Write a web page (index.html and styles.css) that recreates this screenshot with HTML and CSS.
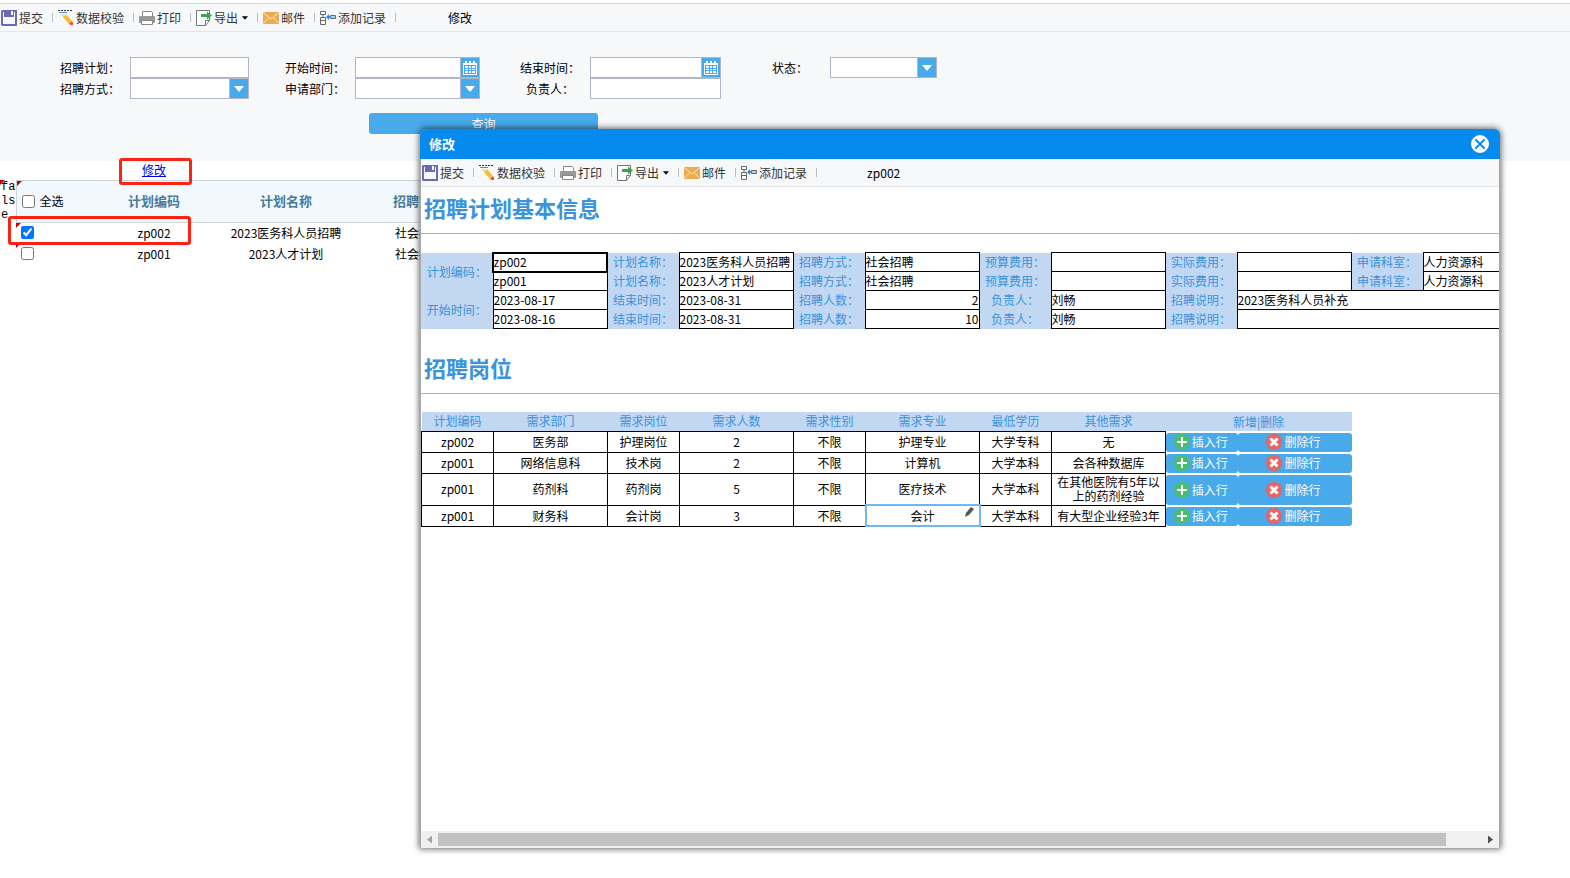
FILE: index.html
```html
<!DOCTYPE html>
<html lang="zh-CN">
<head>
    <meta charset="UTF-8">
    <meta name="viewport" content="width=device-width, initial-scale=1.0">
    <title>招聘计划</title>
    <link rel="stylesheet" href="styles.css">
</head>
<body>

    <!-- shared icons -->
    <svg class="icon-defs" width="0" height="0">
        <symbol id="i-save" viewBox="0 0 16 16"><path fill="#6a6ab0" d="M1 0h15v16H1L0 15V1z"/><path fill="#f7f8fa" d="M2 2h1v5h10V2h1v12H2z"/><path fill="#f7f8fa" d="M10 1h2v4h-2z"/></symbol>
        <symbol id="i-check" viewBox="0 0 16 16"><path stroke="#333" stroke-dasharray="2 1" d="M0 .500h14"/><path stroke="#3d8fff" d="M1 2.500h8"/><path stroke="#8a7a66" d="M4 4l2 3"/><path fill="#f9bd33" d="M5 7l3-3 6 7-3 3z"/><path fill="#fde7b0" d="M4 4l4 0-3 3z"/><path fill="#ea4b33" d="M11 14l3-3 1 2v2h-2z"/></symbol>
        <symbol id="i-print" viewBox="0 0 16 16"><path fill="#fff" stroke="#888" d="M3.500 6V1.500h9l1 1V6"/><rect y="6" width="16" height="7" rx="1" fill="#999"/><path fill="#fff" stroke="#888" d="M2.500 10.500h11v4h-11z"/></symbol>
        <symbol id="i-export" viewBox="0 0 16 16"><path fill="#fff" stroke="#777" d="M.500.500h13v10l-4 5h-9zM9.500 15v-4.500h4"/><path fill="#37a84a" d="M5 4h6V1.500L16 5.500 11 9.500V7H5z"/></symbol>
        <symbol id="i-mail" viewBox="0 0 16 12"><path fill="#ebac4f" d="M0 0h16v12H0z"/><path fill="none" stroke="#fce6c4" d="M0 .500l8 6.500 8-6.500M0 11.500l6-6M16 11.500l-6-6"/></symbol>
        <symbol id="i-add" viewBox="0 0 16 16"><path fill="#fff" stroke="#666" d="M.500 1.500h5v3h-5zM.500 7.500h5v3h-5zM.500 10.500h5v4h-5zM3 4v3"/><path fill="#a9d3f5" stroke="#666" d="M10.500 5.500h5v3h-5z"/><path fill="#2f86e8" d="M6 7l3-3v2h2v2H9v2z"/></symbol>
        <symbol id="i-caret" viewBox="0 0 10 6"><path fill="currentColor" d="M0 0h10L5 6z"/></symbol>
        <symbol id="i-cal" viewBox="0 0 14 14"><path fill="#fff" d="M0 2h14v12H0z"/><path fill="#fff" d="M2 0h2v3H2zM6 0h2v3H6zM10 0h2v3h-2z"/><path fill="#48a9eb" d="M1 4h12v9H1z"/><path fill="#fff" d="M2 5h3v2H2zM6 5h2v2H6zM9 5h3v2H9zM2 8h3v1H2zM6 8h2v1H6zM9 8h3v1H9zM2 10h3v2H2zM6 10h2v2H6zM9 10h3v2H9z"/></symbol>
        <symbol id="i-plus" viewBox="0 0 16 16"><circle cx="8" cy="8" r="8" fill="#48bd70"/><path stroke="#fff" stroke-width="2" d="M8 3v10M3 8h10"/></symbol>
        <symbol id="i-del" viewBox="0 0 16 16"><circle cx="8" cy="8" r="8" fill="#e86464"/><path stroke="#fff" stroke-width="3" d="M4.500 4.500l7 7M11.500 4.500l-7 7"/></symbol>
        <symbol id="i-close" viewBox="0 0 18 18"><circle cx="9" cy="9" r="9" fill="#fff"/><path stroke="#058bee" stroke-width="2" d="M4.500 4.500l9 9M13.500 4.500l-9 9"/></symbol>
        <symbol id="i-pencil" viewBox="0 0 10 10"><path fill="#555" d="M1 6l5-6 3 2-5 6-4 2z"/></symbol>
    </svg>

    <div class="toolbar main-toolbar">
        <button><svg><use href="#i-save"/></svg>提交</button>
        <button><svg><use href="#i-check"/></svg>数据校验</button>
        <button><svg><use href="#i-print"/></svg>打印</button>
        <button><svg><use href="#i-export"/></svg>导出<svg class="caret"><use href="#i-caret"/></svg></button>
        <button><svg><use href="#i-mail"/></svg>邮件</button>
        <button><svg><use href="#i-add"/></svg>添加记录</button>
        <span class="current">修改</span>
    </div>

    <form class="search">
        <div class="fields">
            <label for="plan">招聘计划：</label>
            <div class="field"><input type="text" id="plan"></div>
            <label for="start">开始时间：</label>
            <div class="field"><input type="text" id="start"><span class="drop"><svg class="cal"><use href="#i-cal"/></svg></span></div>
            <label for="end">结束时间：</label>
            <div class="field"><input type="text" id="end"><span class="drop"><svg class="cal"><use href="#i-cal"/></svg></span></div>
            <label for="status">状态：</label>
            <div class="field"><select id="status"></select><span class="drop"><svg class="arrow"><use href="#i-caret"/></svg></span></div>

            <label for="way">招聘方式：</label>
            <div class="field"><select id="way"></select><span class="drop"><svg class="arrow"><use href="#i-caret"/></svg></span></div>
            <label for="dept">申请部门：</label>
            <div class="field"><select id="dept"></select><span class="drop"><svg class="arrow"><use href="#i-caret"/></svg></span></div>
            <label for="owner">负责人：</label>
            <div class="field"><input type="text" id="owner"></div>
        </div>
        <button type="button" class="query">查询</button>
    </form>

    <div class="list">
        <table class="plans">
            <colgroup><col class="c-flag"><col class="c-check"><col class="c-code"><col class="c-name"><col class="c-way"></colgroup>
            <tr class="links">
                <td></td>
                <td></td>
                <td><a href="#edit">修改</a></td>
                <td></td>
                <td></td>
            </tr>
            <tr class="head">
                <td class="flag mark">false</td>
                <th class="mark pick"><label><input type="checkbox">全选</label></th>
                <th>计划编码</th>
                <th>计划名称</th>
                <th>招聘方式</th>
            </tr>
            <tr>
                <td></td>
                <td class="mark pick"><input type="checkbox" aria-label="zp002" checked></td>
                <td>zp002</td>
                <td>2023医务科人员招聘</td>
                <td>社会招聘</td>
            </tr>
            <tr>
                <td></td>
                <td class="mark pick"><input type="checkbox" aria-label="zp001"></td>
                <td>zp001</td>
                <td>2023人才计划</td>
                <td>社会招聘</td>
            </tr>
        </table>
        <div class="hint hint-link"></div>
        <div class="hint hint-row"></div>
    </div>

    <div class="dialog" role="dialog" aria-labelledby="dialogTitle">
        <div class="dialog-head">
            <span id="dialogTitle">修改</span>
            <button class="close" aria-label="关闭"><svg><use href="#i-close"/></svg></button>
        </div>
        <div class="dialog-body">
            <div class="toolbar">
                <button><svg><use href="#i-save"/></svg>提交</button>
                <button><svg><use href="#i-check"/></svg>数据校验</button>
                <button><svg><use href="#i-print"/></svg>打印</button>
                <button><svg><use href="#i-export"/></svg>导出<svg class="caret"><use href="#i-caret"/></svg></button>
                <button><svg><use href="#i-mail"/></svg>邮件</button>
                <button><svg><use href="#i-add"/></svg>添加记录</button>
                <span class="current">zp002</span>
            </div>

            <div class="sheet">
                <h2>招聘计划基本信息</h2>
                <table class="grid info">
                    <colgroup><col class="w1"><col class="w2"><col class="w1"><col class="w2"><col class="w1"><col class="w2"><col class="w1"><col class="w2"><col class="w1"><col class="w2"><col class="w1"><col class="w2"></colgroup>
                    <tr>
                        <th rowspan="2">计划编码：</th><td class="active">zp002</td>
                        <th>计划名称：</th><td>2023医务科人员招聘</td>
                        <th>招聘方式：</th><td>社会招聘</td>
                        <th>预算费用：</th><td></td>
                        <th>实际费用：</th><td></td>
                        <th>申请科室：</th><td>人力资源科</td>
                    </tr>
                    <tr>
                        <td>zp001</td>
                        <th>计划名称：</th><td>2023人才计划</td>
                        <th>招聘方式：</th><td>社会招聘</td>
                        <th>预算费用：</th><td></td>
                        <th>实际费用：</th><td></td>
                        <th>申请科室：</th><td>人力资源科</td>
                    </tr>
                    <tr>
                        <th rowspan="2">开始时间：</th><td>2023-08-17</td>
                        <th>结束时间：</th><td>2023-08-31</td>
                        <th>招聘人数：</th><td class="num">2</td>
                        <th>负责人：</th><td>刘畅</td>
                        <th>招聘说明：</th><td colspan="3">2023医务科人员补充</td>
                    </tr>
                    <tr>
                        <td>2023-08-16</td>
                        <th>结束时间：</th><td>2023-08-31</td>
                        <th>招聘人数：</th><td class="num">10</td>
                        <th>负责人：</th><td>刘畅</td>
                        <th>招聘说明：</th><td colspan="3"></td>
                    </tr>
                </table>

                <h2>招聘岗位</h2>
                <table class="grid jobs">
                    <colgroup><col class="w1"><col class="w2"><col class="w1"><col class="w2"><col class="w1"><col class="w2"><col class="w1"><col class="w2"><col class="w1"><col class="w2"></colgroup>
                    <tr>
                        <th>计划编码</th><th>需求部门</th><th>需求岗位</th><th>需求人数</th><th>需求性别</th><th>需求专业</th><th>最低学历</th><th>其他需求</th><th colspan="2">新增|删除</th>
                    </tr>
                    <tr>
                        <td>zp002</td><td>医务部</td><td>护理岗位</td><td>2</td><td>不限</td><td>护理专业</td><td>大学专科</td><td>无</td>
                        <td class="op"><button><svg><use href="#i-plus"/></svg>插入行</button></td>
                        <td class="op"><button><svg><use href="#i-del"/></svg>删除行</button></td>
                    </tr>
                    <tr>
                        <td>zp001</td><td>网络信息科</td><td>技术岗</td><td>2</td><td>不限</td><td>计算机</td><td>大学本科</td><td>会各种数据库</td>
                        <td class="op"><button><svg><use href="#i-plus"/></svg>插入行</button></td>
                        <td class="op"><button><svg><use href="#i-del"/></svg>删除行</button></td>
                    </tr>
                    <tr class="tall">
                        <td>zp001</td><td>药剂科</td><td>药剂岗</td><td>5</td><td>不限</td><td>医疗技术</td><td>大学本科</td><td>在其他医院有5年以上的药剂经验</td>
                        <td class="op"><button><svg><use href="#i-plus"/></svg>插入行</button></td>
                        <td class="op"><button><svg><use href="#i-del"/></svg>删除行</button></td>
                    </tr>
                    <tr>
                        <td>zp001</td><td>财务科</td><td>会计岗</td><td>3</td><td>不限</td><td class="editing">会计<svg><use href="#i-pencil"/></svg></td><td>大学本科</td><td>有大型企业经验3年</td>
                        <td class="op"><button><svg><use href="#i-plus"/></svg>插入行</button></td>
                        <td class="op"><button><svg><use href="#i-del"/></svg>删除行</button></td>
                    </tr>
                </table>
            </div>

            <div class="scrollbar">
                <span class="end left"></span>
                <div class="track"><div class="thumb"></div></div>
                <span class="end right"></span>
            </div>
        </div>
    </div>

</body>
</html>
```
FILE: styles.css
```css
* {
    margin: 0;
    padding: 0;
    box-sizing: border-box;
}

body {
    font-family: "Noto Sans CJK SC", "Liberation Sans", sans-serif;
    font-size: 12px;
    line-height: 16px;
    color: #000;
    background: #fff;
}

button, input, select {
    font: inherit;
    border: none;
    background: none;
}

button {
    cursor: pointer;
}

table {
    border-collapse: collapse;
    table-layout: fixed;
}

.icon-defs {
    position: absolute;
}

/* toolbar */
.toolbar {
    display: flex;
    align-items: center;
    height: 28px;
    padding-left: 1px;
    background: #f7f8fa;
    border-bottom: 1px solid #e3e6ea;
}

.main-toolbar {
    height: 29px;
    margin-top: 3px;
    border-top: 1px solid #d9d9d9;
}

.toolbar button {
    display: flex;
    align-items: center;
    gap: 2px;
    margin-right: 5px;
    color: #333;
}

.toolbar button::after {
    content: "";
    width: 1px;
    height: 9px;
    margin-left: 7px;
    background: #bbb;
}

.toolbar svg {
    width: 16px;
    height: 16px;
}

.toolbar .caret {
    width: 6px;
    height: 4px;
    margin-left: 2px;
    color: #000;
}

.toolbar .current {
    margin-left: 47px;
}

/* search form */
.search {
    height: 129px;
    padding-top: 25px;
    background: #f7f8fa;
}

.fields {
    display: grid;
    grid-template-columns: 130px 119px 106px 125px 110px 131px 109px 107px;
    grid-auto-rows: 21px;
}

.fields label {
    width: 80px;
    margin-left: auto;
    line-height: 22px;
    text-align: center;
}

.field {
    display: flex;
    background: #fff;
    border: 1px solid #b4b4c8;
}

.field input, .field select {
    flex: 1;
    min-width: 0;
    appearance: none;
}

.drop {
    display: flex;
    align-items: center;
    justify-content: center;
    width: 19px;
    color: #fff;
    background: #48a9eb;
    border-left: 1px solid #b4b4c8;
}

.cal {
    width: 14px;
    height: 14px;
}

.arrow {
    width: 10px;
    height: 6px;
}

.query {
    display: block;
    width: 229px;
    height: 21px;
    margin: 14px 0 0 369px;
    color: #fff;
    background: #48a9eb;
    border-radius: 3px;
}

/* plan list */
.list {
    position: relative;
}

.plans {
    width: 472px;
    text-align: center;
}

.c-flag {
    width: 16px;
}

.c-check {
    width: 86px;
}

.c-code {
    width: 104px;
}

.c-name {
    width: 160px;
}

.c-way {
    width: 106px;
}

.plans tr {
    height: 21px;
}

.plans .links {
    height: 19px;
}

.plans a {
    color: #00e;
}

.plans .head {
    height: 42px;
}

.plans th {
    font-size: 13px;
    color: #4d7a96;
    background: #f1f9ff;
    border-top: 1px solid #d0d3d6;
    border-bottom: 1px solid #d0d3d6;
}

.plans .flag {
    font-family: "Liberation Mono", monospace;
    line-height: 14px;
    text-align: left;
    padding-left: 1px;
    word-break: break-all;
    border-right: 1px solid #d0d3d6;
}

.plans .pick {
    padding-left: 5px;
    text-align: left;
}

.pick label {
    display: flex;
    align-items: center;
    gap: 5px;
    font-size: 12px;
    font-weight: normal;
    color: #000;
}

.pick input {
    display: block;
    width: 13px;
    height: 13px;
}

.mark {
    position: relative;
}

.mark::before {
    content: "";
    position: absolute;
    top: 0;
    left: 0;
    border-top: 5px solid #c00000;
    border-right: 5px solid transparent;
}

.hint {
    position: absolute;
    border: 3px solid #fb2314;
    border-radius: 3px;
}

.hint-link {
    top: -3px;
    left: 119px;
    width: 73px;
    height: 27px;
}

.hint-row {
    top: 55px;
    left: 8px;
    width: 183px;
    height: 29px;
}

/* dialog */
.dialog {
    position: absolute;
    inset: 129px 70px 30px 420px;
    display: flex;
    flex-direction: column;
    background: #a8a8a8;
    border-radius: 6px 6px 0 0;
    box-shadow: 0 0 6px 1px rgba(0, 0, 0, 0.6);
}

.dialog-head {
    display: flex;
    align-items: center;
    justify-content: space-between;
    height: 30px;
    padding: 0 11px 0 9px;
    font-size: 13px;
    font-weight: bold;
    color: #fff;
    background: #058bee;
    border-radius: 6px 6px 0 0;
}

.close, .close svg {
    display: block;
    width: 18px;
    height: 18px;
}

.dialog-body {
    flex: 1;
    display: flex;
    flex-direction: column;
    min-height: 0;
    margin: 0 1px;
    background: #fff;
}

.dialog .toolbar .current {
    margin-left: 45px;
}

.sheet {
    flex: 1;
    overflow: hidden;
}

.sheet h2 {
    height: 47px;
    padding-left: 3px;
    margin-bottom: 18px;
    font-size: 22px;
    line-height: 40px;
    color: #3a93dc;
    border-bottom: 1px solid #6dc3ee;
}

.grid {
    margin-bottom: 18px;
    line-height: 14px;
}

.info {
    width: 1116px;
}

.jobs {
    width: 930px;
    text-align: center;
}

.w1 {
    width: 72px;
}

.w2 {
    width: 114px;
}

.grid tr {
    height: 19px;
}

.grid th {
    font-weight: normal;
    color: #3a93dc;
    background: #c1d7f2;
}

.grid td {
    border: 1px solid #000;
}

.info td {
    white-space: nowrap;
}

.info .num {
    text-align: right;
}

.info .active {
    outline: 2px solid #000;
    outline-offset: -1px;
}

.jobs tr + tr {
    height: 21px;
}

.jobs tr.tall {
    height: 32px;
}

.jobs .editing {
    position: relative;
    outline: 2px solid #70b8ee;
    outline-offset: -1px;
}

.editing svg {
    position: absolute;
    top: 1px;
    right: 4px;
    width: 10px;
    height: 10px;
}

.jobs .op {
    height: 1px;
    padding-top: 1px;
    border: none;
}

.op button {
    display: flex;
    align-items: center;
    justify-content: center;
    gap: 2px;
    width: 100%;
    height: 19px;
    padding-right: 2px;
    color: #fff;
    background: #48a9eb;
    border-radius: 3px;
}

.tall .op button {
    height: 30px;
}

.op svg {
    width: 16px;
    height: 16px;
}

.scrollbar {
    display: flex;
    align-items: center;
    height: 17px;
    background: #f0f0f0;
}

.end {
    width: 17px;
    height: 8px;
    border: 4px solid transparent;
}

.left {
    border-left-width: 6px;
    border-right-width: 6px;
    background: #a3a3a3;
    background-clip: padding-box;
    clip-path: polygon(6px 4px, 11px 0, 11px 8px);
    border-top-width: 0;
    border-bottom-width: 0;
}

.right {
    border-left-width: 6px;
    border-right-width: 6px;
    background: #505050;
    background-clip: padding-box;
    clip-path: polygon(6px 0, 11px 4px, 6px 8px);
    border-top-width: 0;
    border-bottom-width: 0;
}

.track {
    flex: 1;
}

.thumb {
    width: calc(100% - 36px);
    height: 13px;
    background: #c1c1c1;
}
```
